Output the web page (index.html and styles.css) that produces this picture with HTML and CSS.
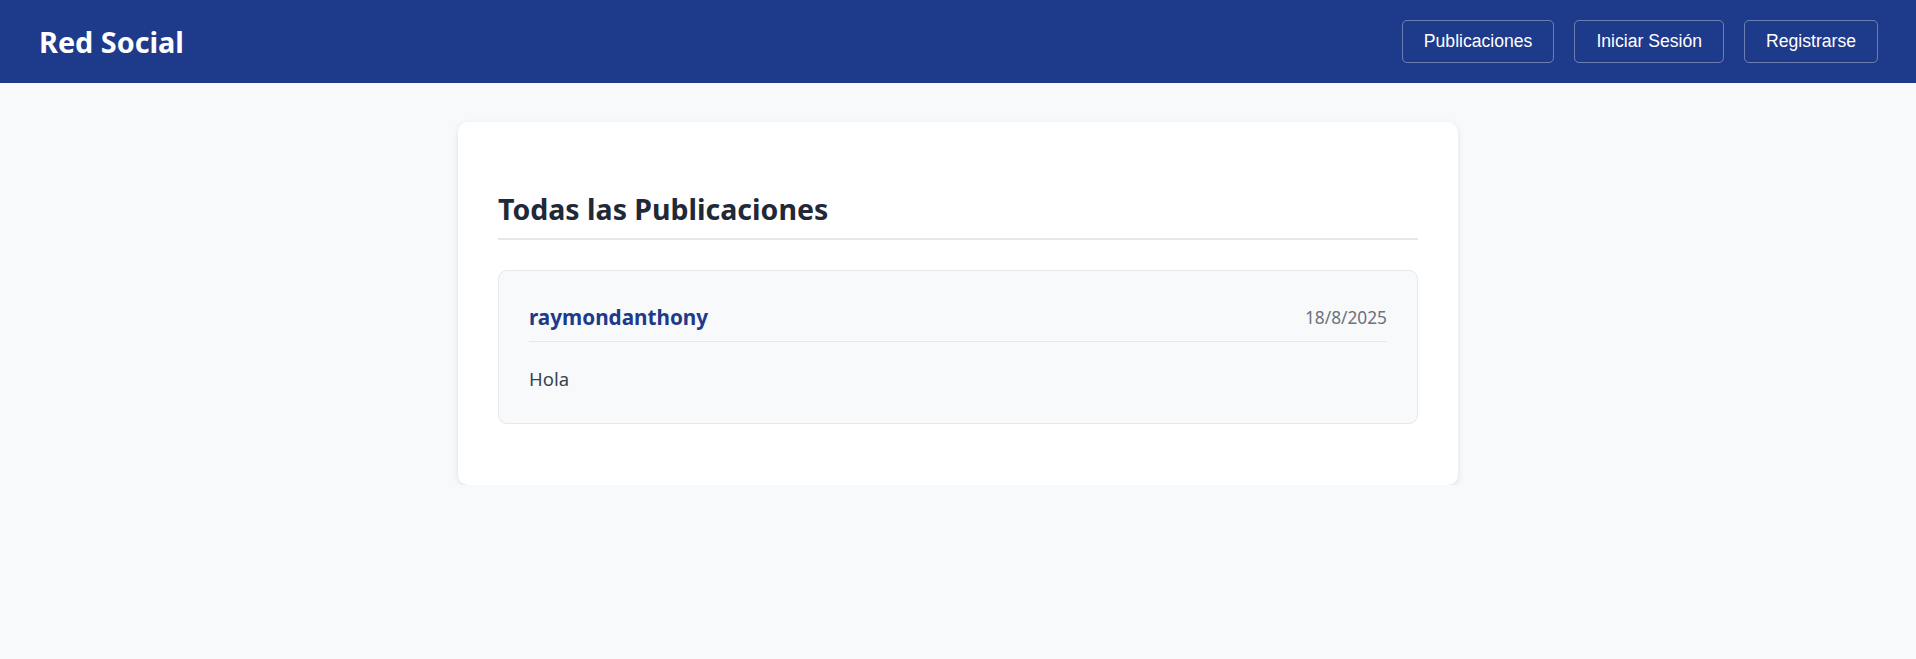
FILE: index.html
```html
<!DOCTYPE html>
<html lang="es">
<head>
<meta charset="utf-8">
<title>Red Social</title>
<link rel="stylesheet" href="styles.css">
</head>
<body>
<header class="topbar">
  <div class="brand">Red Social</div>
  <nav class="nav">
    <a class="nav-btn" href="#">Publicaciones</a>
    <a class="nav-btn" href="#">Iniciar Sesión</a>
    <a class="nav-btn" href="#">Registrarse</a>
  </nav>
</header>
<main class="main">
  <section class="panel">
    <h2 class="panel-title">Todas las Publicaciones</h2>
    <article class="post">
      <div class="post-head">
        <span class="post-user">raymondanthony</span>
        <span class="post-date">18/8/2025</span>
      </div>
      <p class="post-body">Hola</p>
    </article>
  </section>
</main>
</body>
</html>
```
FILE: styles.css
```css
* { box-sizing: border-box; }
html, body { margin: 0; padding: 0; }
body {
  background: #f8f9fa;
  font-family: "Noto Sans", "Open Sans", sans-serif;
  color: #1f2937;
}
.topbar {
  height: 83px;
  background: #1e3a8a;
  display: flex;
  align-items: center;
  justify-content: space-between;
  padding: 0 38px 0 39px;
}
.brand {
  color: #ffffff;
  font-weight: 700;
  font-size: 28.8px;
  line-height: 1;
  padding-top: 2px;
}
.nav {
  display: flex;
  gap: 20px;
}
.nav-btn {
  display: block;
  height: 43px;
  line-height: 41px;
  padding: 0 21px;
  border: 1px solid rgba(255, 255, 255, 0.35);
  border-radius: 5px;
  color: #ffffff;
  text-decoration: none;
  font-family: "Liberation Sans", Arial, sans-serif;
  font-size: 17.6px;
}
.main {
  padding-top: 39px;
}
.panel {
  width: 1000px;
  margin: 0 auto;
  background: #ffffff;
  border-radius: 10px;
  box-shadow: 0 2px 6px rgba(0, 0, 0, 0.1);
  padding: 40px;
}
.panel-title {
  margin: 27px 0 30px;
  padding-bottom: 9px;
  border-bottom: 2px solid #e5e7eb;
  font-size: 28.5px;
  font-weight: 700;
  line-height: 40px;
  color: #1f2937;
}
.post {
  background: #f8f9fa;
  border: 1px solid #e5e7eb;
  border-radius: 9px;
  padding: 30px;
  margin-bottom: 21px;
}
.post-head {
  display: flex;
  justify-content: space-between;
  align-items: center;
  padding-bottom: 8px;
  border-bottom: 1px solid #e5e7eb;
}
.post-user {
  color: #1e3a8a;
  font-weight: 700;
  font-size: 20.7px;
  line-height: 32px;
}
.post-date {
  color: #6b7280;
  font-size: 17.3px;
}
.post-body {
  margin: 23px 0 0;
  color: #374151;
  font-size: 18.5px;
  line-height: 28px;
}
```
